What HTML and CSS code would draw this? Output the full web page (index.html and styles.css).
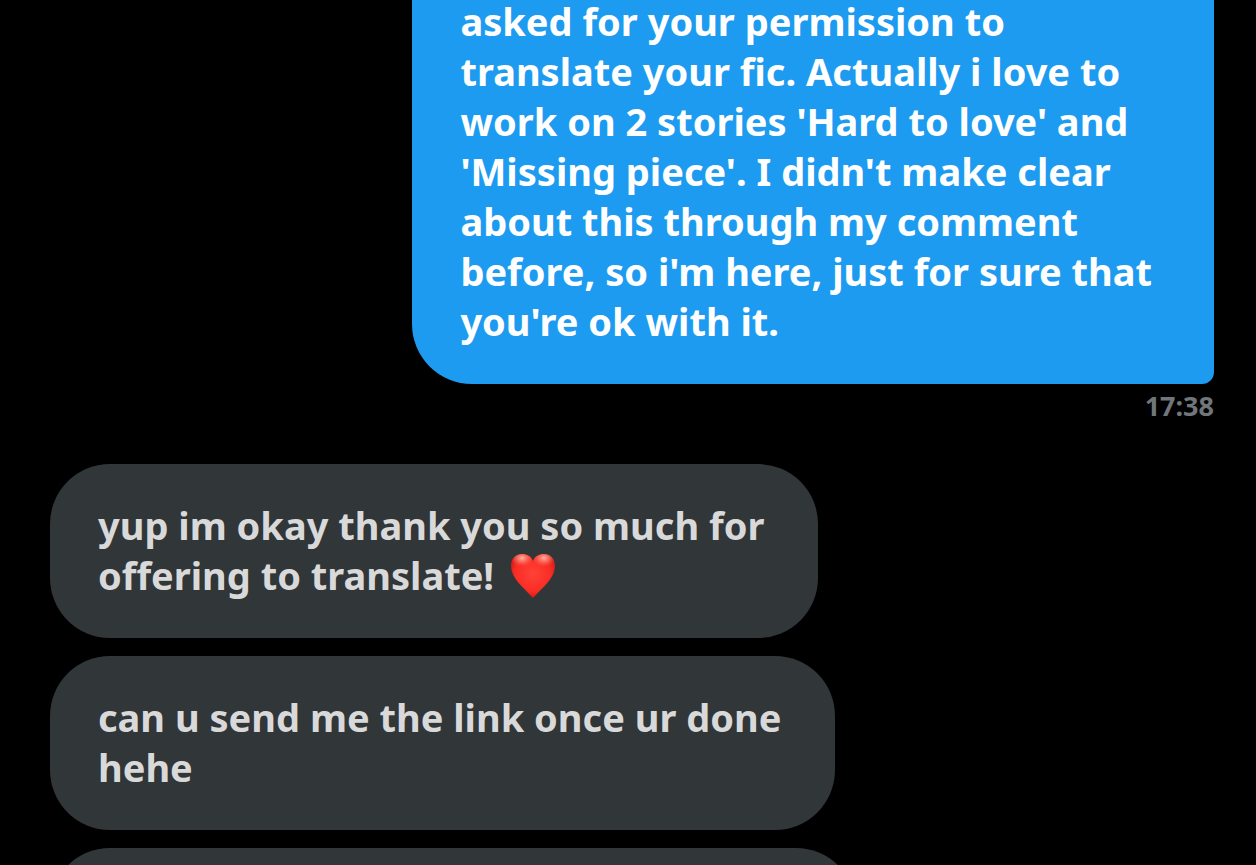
FILE: index.html
```html
<!DOCTYPE html>
<html lang="en">
<head>
<meta charset="utf-8">
<title>Messages</title>
<link rel="stylesheet" href="styles.css">
</head>
<body>
<main class="chat">
  <div class="message message--sent">
    <p class="bubble bubble--sent">asked for your permission to<br>translate your fic. Actually i love to<br>work on 2 stories 'Hard to love' and<br>'Missing piece'. I didn't make clear<br>about this through my comment<br>before, so i'm here, just for sure that<br>you're ok with it.</p>
    <time class="time" datetime="17:38">17:38</time>
  </div>
  <div class="message">
    <p class="bubble bubble--received">yup im okay thank you so much for<br>offering to translate! <svg class="heart" viewBox="0 0 46 46" role="img" aria-label="red heart">
      <defs>
        <radialGradient id="heart-fill" cx="0.5" cy="0.45" r="0.6">
          <stop offset="0" stop-color="#ff4238"/>
          <stop offset="0.65" stop-color="#fa2c24"/>
          <stop offset="1" stop-color="#b8140f"/>
        </radialGradient>
        <radialGradient id="heart-shine">
          <stop offset="0" stop-color="#ffb5a5"/>
          <stop offset="0.5" stop-color="#ff8070" stop-opacity="0.6"/>
          <stop offset="1" stop-color="#ff4a3c" stop-opacity="0"/>
        </radialGradient>
        <clipPath id="heart-shape">
          <path d="M23 8C21 3 17 1 12 1C5 1 1 6 1 13C1 25 13 34 23 45C33 34 45 25 45 13C45 6 41 1 34 1C29 1 25 3 23 8Z"/>
        </clipPath>
      </defs>
      <g clip-path="url(#heart-shape)">
        <rect width="46" height="46" fill="url(#heart-fill)"/>
        <ellipse fill="url(#heart-shine)" cx="12" cy="5" rx="12" ry="9"/>
        <ellipse fill="url(#heart-shine)" cx="34" cy="5" rx="12" ry="9"/>
      </g>
    </svg></p>
  </div>
  <div class="message">
    <p class="bubble bubble--received">can u send me the link once ur done<br>hehe</p>
  </div>
  <div class="message">
    <p class="bubble bubble--received bubble--next"></p>
  </div>
</main>
</body>
</html>
```
FILE: styles.css
```css
* { box-sizing: border-box; }
html { background: #000; }
body { margin: 0; overflow: hidden; }
.chat {
  display: flex;
  flex-direction: column;
  gap: 18px;
  height: 100vh;
  padding: 0 42px 0 50px;
  overflow: hidden;
  background: #000;
  font-family: "Noto Sans", "Open Sans", sans-serif;
  font-weight: 700;
}
.message {
  display: flex;
  flex: none;
  flex-direction: column;
  align-items: flex-start;
}
/* The sent message is scrolled partly out of view. */
.message--sent {
  align-items: flex-end;
  margin-top: -4px;
  margin-bottom: 18px;
}
.bubble {
  margin: 0;
  font-size: 38px;
  line-height: 50px;
  white-space: nowrap;
}
.bubble--sent {
  padding: 0 62px 38px 48px;
  border-radius: 0 0 12px 60px;
  background: #1d9bf0;
  color: #fff;
}
.bubble--received {
  padding: 36px 54px 38px 48px;
  border-radius: 60px;
  background: #313639;
  color: #d9d9d9;
}
.bubble--next { width: 806px; height: 174px; }
.time {
  color: #71767b;
  font-size: 27px;
  line-height: 44px;
}
.heart {
  width: 46px;
  height: 46px;
  margin-left: 6px;
  vertical-align: -9px;
}
```
